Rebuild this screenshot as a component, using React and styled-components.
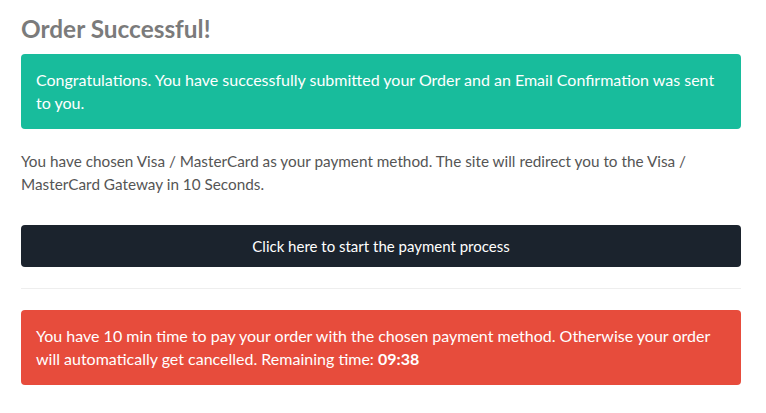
import React from "react";
import styled, { createGlobalStyle } from "styled-components";

const Global = createGlobalStyle`
  html, body { margin: 0; padding: 0; background: #fff; }
  body { font-family: Lato, "Open Sans", sans-serif; font-size: 15px; line-height: 1.5; color: #555; }
  * { box-sizing: border-box; }
`;

const Page = styled.div`
  width: 720px;
  margin-left: 21px;
  padding-top: 14px;
`;

const Title = styled.h3`
  margin: 0 0 10px;
  font-size: 24.4px;
  line-height: 30px;
  font-weight: 700;
  color: #7b7b7b;
`;

const Alert = styled.div`
  background: ${(p) => p.$bg};
  color: #fff;
  padding: 15px;
  border-radius: 4px;
  font-size: 16px;
  line-height: 22.5px;
  margin-bottom: ${(p) => p.$mb || 0}px;
`;

const Text = styled.p`
  margin: 0 0 30px;
  font-size: 15.3px;
  line-height: 22.5px;
`;

const Button = styled.button`
  display: block;
  width: 100%;
  height: 42px;
  border: 0;
  border-radius: 4px;
  background: #1b232d;
  color: #fff;
  font-family: inherit;
  font-size: 15px;
  line-height: 22px;
  cursor: pointer;
`;

const Rule = styled.hr`
  margin: 21px 0 21px;
  border: 0;
  border-top: 1px solid #eee;
`;

export default function App() {
  return (
    <>
      <Global />
      <Page>
        <Title>Order Successful!</Title>
        <Alert $bg="#18bc9c" $mb={21}>
          Congratulations. You have successfully submitted your Order and an Email Confirmation was sent to you.
        </Alert>
        <Text>
          You have chosen Visa / MasterCard as your payment method. The site will redirect you to the Visa / MasterCard Gateway in 10 Seconds.
        </Text>
        <Button>Click here to start the payment process</Button>
        <Rule />
        <Alert $bg="#e74c3c">
          You have 10 min time to pay your order with the chosen payment method. Otherwise your order will automatically get cancelled. Remaining time: <b>09:38</b>
        </Alert>
      </Page>
    </>
  );
}
